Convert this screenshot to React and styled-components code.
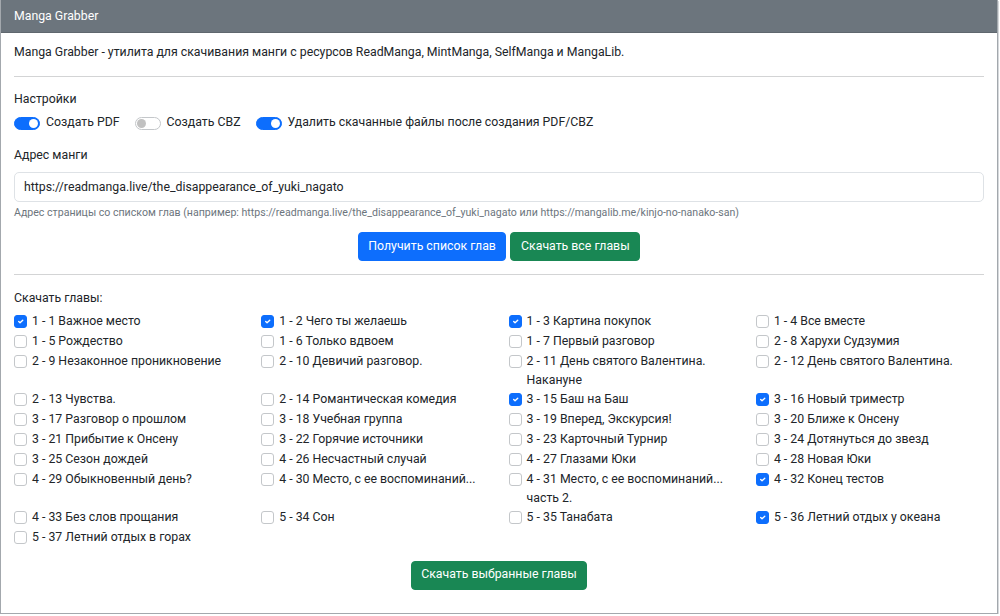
import React, { useState } from 'react';
import styled, { createGlobalStyle } from 'styled-components';

const GlobalStyle = createGlobalStyle`
  body {
    margin: 0;
    background: #fff;
    font-family: Roboto, "Liberation Sans", Arial, sans-serif;
    font-size: 12.3px;
    line-height: 19.5px;
    color: #212529;
  }
  * { box-sizing: border-box; }
`;

const Card = styled.div`
  width: 998px;
  height: 614px;
  border: 1px solid #a3a8ad;
  border-top: none;
  box-shadow: 1px 1px 0 #d6d9dc;
  background: #fff;
  display: flex;
  flex-direction: column;
`;

const CardHeader = styled.div`
  height: 33px;
  background: #6c757d;
  color: #fff;
  padding: 7px 13px;
  border-bottom: 1px solid #5f676e;
`;

const CardBody = styled.div`
  padding: 10px 13px 24px;
`;

const Text = styled.p`
  margin: 0;
`;

const Rule = styled.hr`
  border: 0;
  border-top: 1px solid #d3d4d5;
  margin: ${p => p.$mt || 13}px 0 ${p => p.$mb || 13}px;
`;

const Label = styled.div`
  margin-bottom: ${p => p.$mb || 5}px;
`;

const Switches = styled.div`
  display: flex;
  gap: 15px;
  margin-bottom: 13px;
`;

const SwitchItem = styled.label`
  display: flex;
  align-items: center;
  gap: 6px;
  min-height: 20px;
  cursor: pointer;
`;

const Track = styled.span`
  position: relative;
  width: 26px;
  height: 13px;
  border-radius: 7px;
  background: ${p => (p.$on ? '#0d6efd' : '#fff')};
  border: 1px solid ${p => (p.$on ? '#0d6efd' : '#c4c7ca')};
  flex-shrink: 0;

  &::after {
    content: '';
    position: absolute;
    top: 1px;
    left: ${p => (p.$on ? '14px' : '1px')};
    width: 9px;
    height: 9px;
    border-radius: 50%;
    background: ${p => (p.$on ? '#fff' : '#c1c1c1')};
  }
`;

const Input = styled.input`
  display: block;
  width: 100%;
  height: 30px;
  padding: 4px 9px;
  font: inherit;
  color: #212529;
  border: 1px solid #dee2e6;
  border-radius: 5px;
  outline: none;
`;

const Help = styled.div`
  margin-top: 3px;
  font-size: 10.6px;
  line-height: 16.5px;
  color: #6c757d;
`;

const ButtonRow = styled.div`
  display: flex;
  justify-content: center;
  gap: 4px;
  margin-top: ${p => p.$mt || 11}px;
`;

const Button = styled.button`
  height: 29px;
  padding: 0 9.6px;
  font: inherit;
  color: #fff;
  background: ${p => (p.$variant === 'primary' ? '#0d6efd' : '#198754')};
  border: 1px solid ${p => (p.$variant === 'primary' ? '#0d6efd' : '#198754')};
  border-radius: 4px;
  cursor: pointer;
`;

const Grid = styled.div`
  display: grid;
  grid-template-columns: repeat(4, 1fr);
  column-gap: 19.2px;
`;

const Chapter = styled.label`
  display: flex;
  align-items: flex-start;
  gap: 5px;
  min-height: 20px;
  line-height: 19px;
  cursor: pointer;
`;

const Box = styled.span`
  flex-shrink: 0;
  width: 13px;
  height: 13px;
  margin-top: 3px;
  border-radius: 3px;
  border: 1px solid ${p => (p.$on ? '#0d6efd' : '#c4c7ca')};
  background: ${p => (p.$on ? '#0d6efd' : '#fff')};
  display: flex;
  align-items: center;
  justify-content: center;
`;

const chapters = [
  ['1 - 1 Важное место', true],
  ['1 - 2 Чего ты желаешь', true],
  ['1 - 3 Картина покупок', true],
  ['1 - 4 Все вместе', false],
  ['1 - 5 Рождество', false],
  ['1 - 6 Только вдвоем', false],
  ['1 - 7 Первый разговор', false],
  ['2 - 8 Харухи Судзумия', false],
  ['2 - 9 Незаконное проникновение', false],
  ['2 - 10 Девичий разговор.', false],
  ['2 - 11 День святого Валентина. Накануне', false],
  ['2 - 12 День святого Валентина.', false],
  ['2 - 13 Чувства.', false],
  ['2 - 14 Романтическая комедия', false],
  ['3 - 15 Баш на Баш', true],
  ['3 - 16 Новый триместр', true],
  ['3 - 17 Разговор о прошлом', false],
  ['3 - 18 Учебная группа', false],
  ['3 - 19 Вперед, Экскурсия!', false],
  ['3 - 20 Ближе к Онсену', false],
  ['3 - 21 Прибытие к Онсену', false],
  ['3 - 22 Горячие источники', false],
  ['3 - 23 Карточный Турнир', false],
  ['3 - 24 Дотянуться до звезд', false],
  ['3 - 25 Сезон дождей', false],
  ['4 - 26 Несчастный случай', false],
  ['4 - 27 Глазами Юки', false],
  ['4 - 28 Новая Юки', false],
  ['4 - 29 Обыкновенный день?', false],
  ['4 - 30 Место, с ее воспоминаний...', false],
  ['4 - 31 Место, с ее воспоминаний... часть 2.', false],
  ['4 - 32 Конец тестов', true],
  ['4 - 33 Без слов прощания', false],
  ['5 - 34 Сон', false],
  ['5 - 35 Танабата', false],
  ['5 - 36 Летний отдых у океана', true],
  ['5 - 37 Летний отдых в горах', false],
];

function Check() {
  return (
    <svg width="9" height="9" viewBox="0 0 20 20">
      <path d="M6 10l3 3 6-6" fill="none" stroke="#fff" strokeWidth="3" strokeLinecap="round" strokeLinejoin="round" />
    </svg>
  );
}

function Switch({ on, children }) {
  return (
    <SwitchItem>
      <Track $on={on} />
      {children}
    </SwitchItem>
  );
}

export default function App() {
  const [checked, setChecked] = useState(chapters.map(c => c[1]));

  const toggle = i => setChecked(prev => prev.map((v, j) => (j === i ? !v : v)));

  return (
    <>
      <GlobalStyle />
      <Card>
        <CardHeader>Manga Grabber</CardHeader>
        <CardBody>
          <Text>Manga Grabber - утилита для скачивания манги с ресурсов ReadManga, MintManga, SelfManga и MangaLib.</Text>
          <Rule />

          <Label $mb={4}>Настройки</Label>
          <Switches>
            <Switch on>Создать PDF</Switch>
            <Switch on={false}>Создать CBZ</Switch>
            <Switch on>Удалить скачанные файлы после создания PDF/CBZ</Switch>
          </Switches>

          <Label $mb={6}>Адрес манги</Label>
          <Input defaultValue="https://readmanga.live/the_disappearance_of_yuki_nagato" />
          <Help>
            Адрес страницы со списком глав (например: https://readmanga.live/the_disappearance_of_yuki_nagato или https://mangalib.me/kinjo-no-nanako-san)
          </Help>
          <ButtonRow>
            <Button $variant="primary">Получить список глав</Button>
            <Button $variant="success">Скачать все главы</Button>
          </ButtonRow>
          <Rule $mt={13} $mb={14} />

          <Label $mb={3}>Скачать главы:</Label>
          <Grid>
            {chapters.map(([title], i) => (
              <Chapter key={title} onClick={() => toggle(i)}>
                <Box $on={checked[i]}>{checked[i] && <Check />}</Box>
                <span>{title}</span>
              </Chapter>
            ))}
          </Grid>
          <ButtonRow $mt={13}>
            <Button $variant="success">Скачать выбранные главы</Button>
          </ButtonRow>
        </CardBody>
      </Card>
    </>
  );
}
